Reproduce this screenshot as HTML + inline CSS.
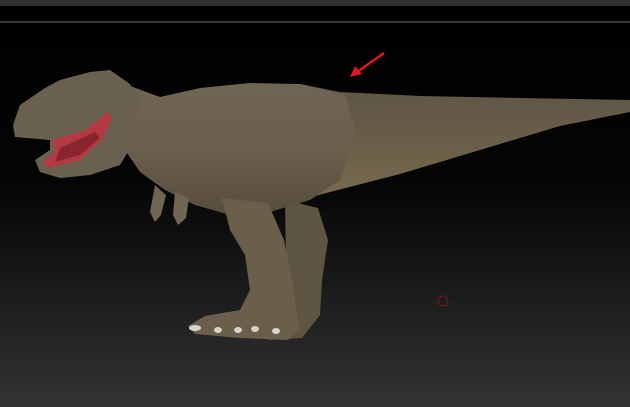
<!DOCTYPE html>
<html><head><style>
html,body{margin:0;padding:0;width:630px;height:407px;overflow:hidden;background:#000}
</style></head><body>
<svg width="630" height="407" viewBox="0 0 630 407" xmlns="http://www.w3.org/2000/svg">
<defs>
<linearGradient id="bg" x1="0" y1="0" x2="0" y2="1">
<stop offset="0" stop-color="#000"/><stop offset="0.45" stop-color="#050505"/><stop offset="1" stop-color="#333"/>
</linearGradient>
<linearGradient id="skin" x1="0" y1="0" x2="0" y2="1">
<stop offset="0" stop-color="#6f6553"/><stop offset="0.5" stop-color="#6a5f4c"/><stop offset="1" stop-color="#574d3d"/>
</linearGradient>
<linearGradient id="tail" x1="0" y1="0" x2="0" y2="1">
<stop offset="0" stop-color="#5e5546"/><stop offset="0.6" stop-color="#6c6049"/><stop offset="1" stop-color="#7a6b50"/>
</linearGradient>
</defs>
<rect width="630" height="407" fill="url(#bg)"/>
<rect width="630" height="6" fill="#2f2f2f"/>
<rect y="21" width="630" height="2" fill="#3a3a3a"/>
<path d="M285 200 L318 208 L328 240 L322 280 L320 315 L302 338 L268 340 L260 325 L282 300 L286 260 Z" fill="#5f5543"/>
<path d="M300 84 L340 92 L420 96 L520 98 L630 100 L630 112 L560 126 L480 150 L400 174 L330 192 L300 200 Z" fill="url(#tail)"/>
<path d="M130 86 L160 97 L200 88 L250 83 L300 84 L345 95 L355 130 L340 180 L310 200 L270 212 L230 215 L195 205 L165 190 L140 172 L125 150 Z" fill="url(#skin)"/>
<path d="M222 198 L268 203 L284 240 L292 280 L296 310 L300 330 L288 340 L240 338 L195 334 L188 326 L205 316 L240 310 L250 290 L245 255 L230 230 Z" fill="#6a5f4b"/>
<path d="M155 185 L166 195 L161 215 L155 222 L150 212 Z" fill="#6f6552"/>
<path d="M175 192 L189 198 L186 218 L178 225 L173 215 Z" fill="#6f6552"/>
<path d="M13 125 L20 105 L45 88 L60 80 L90 72 L110 70 L130 84 L140 100 L135 140 L120 165 L90 175 L60 178 L40 172 L35 160 L50 150 L50 140 L15 137 Z" fill="#6a604f"/>
<path d="M52 140 L85 130 L108 112 L112 118 L102 140 L80 160 L50 168 L42 162 L55 152 Z" fill="#b33a44"/>
<path d="M60 148 L95 132 L100 138 L80 155 L55 162 Z" fill="#8a2530"/>
<g fill="#d8d4cc">
<ellipse cx="195" cy="328" rx="6" ry="3"/><ellipse cx="218" cy="330" rx="4" ry="3"/><ellipse cx="238" cy="330" rx="4" ry="3"/><ellipse cx="255" cy="329" rx="4" ry="3"/><ellipse cx="276" cy="331" rx="4" ry="3"/>
</g>
<line x1="384" y1="53" x2="357" y2="72" stroke="#e2141c" stroke-width="2.5"/>
<path d="M350 77 L355 66 L362 74 Z" fill="#e2141c"/>
<circle cx="443" cy="301" r="5" fill="none" stroke="#7a1a1a" stroke-width="1"/>
</svg>
</body></html>
